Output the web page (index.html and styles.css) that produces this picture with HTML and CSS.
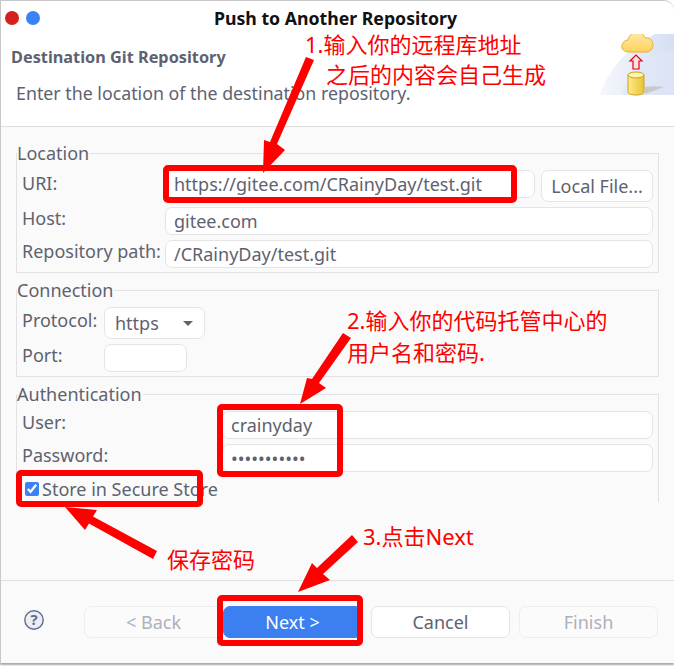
FILE: index.html
```html
<!DOCTYPE html>
<html lang="zh">

<head>
    <meta charset="UTF-8">
    <meta name="viewport" content="width=device-width, initial-scale=1.0">
    <title>Push to Another Repository</title>
    <link rel="stylesheet" href="styles.css">
</head>

<body>

    <div class="window">
        <div class="titlebar">
            <span class="dot dot-close"></span>
            <span class="dot dot-max"></span>
            <h1 class="title">Push to Another Repository</h1>
        </div>

        <div class="banner">
            <div class="banner-text">
                <h2 class="banner-title">Destination Git Repository</h2>
                <p class="banner-desc">Enter the location of the destination repository.</p>
            </div>
            <svg class="banner-art" width="74" height="68" viewBox="0 0 74 68">
                <defs>
                    <linearGradient id="swoosh" x1="0" y1="0" x2="1" y2="0">
                        <stop offset="0" stop-color="#f6f7fc"/>
                        <stop offset="1" stop-color="#d5def3"/>
                    </linearGradient>
                    <linearGradient id="cloud" x1="0" y1="0" x2="0" y2="1">
                        <stop offset="0" stop-color="#ffe9a8"/>
                        <stop offset="1" stop-color="#ffd25e"/>
                    </linearGradient>
                    <linearGradient id="can" x1="0" y1="0" x2="1" y2="0">
                        <stop offset="0" stop-color="#ffe98a"/>
                        <stop offset="1" stop-color="#e8c433"/>
                    </linearGradient>
                </defs>
                <path d="M0 67C8 40 36 8 74 0V67Z" fill="url(#swoosh)"/>
                <path d="M22 67C30 40 52 24 74 22V67Z" fill="#dfe6f6" opacity=".6"/>
                <path d="M45 66l19-7-11-1-8 1z" fill="#c9c9c9"/>
                <path d="M29 24c-5 0-8-3-7-7 1-3 3-5 6-5 1-5 5-8 9-8 4 0 7 3 8 6 4-1 8 2 8 7 0 4-3 7-7 7z" fill="url(#cloud)" stroke="#e8b030"/>
                <path d="M33 41V33h-3l6-6 6 6h-3v8z" fill="#ffe0e0" stroke="#e00010" stroke-width="1.2"/>
                <path d="M28 47v17c0 2 4 3 8 3s8-1 8-3V47z" fill="url(#can)" stroke="#c9a324"/>
                <ellipse cx="36" cy="47" rx="8" ry="3" fill="#fff3a8" stroke="#c9a324"/>
            </svg>
        </div>

        <form class="content">
            <fieldset class="group">
                <legend>Location</legend>
                <div class="grid grid-location">
                    <label class="field-label">URI:</label>
                    <input class="text-input" type="text" value="https://gitee.com/CRainyDay/test.git">
                    <button type="button" class="btn btn-local">Local File...</button>

                    <label class="field-label">Host:</label>
                    <input class="text-input span-2" type="text" value="gitee.com">

                    <label class="field-label">Repository path:</label>
                    <input class="text-input span-2" type="text" value="/CRainyDay/test.git">
                </div>
            </fieldset>

            <fieldset class="group">
                <legend>Connection</legend>
                <div class="grid grid-connection">
                    <label class="field-label">Protocol:</label>
                    <div class="combo">https<span class="caret"></span></div>

                    <label class="field-label">Port:</label>
                    <input class="text-input port-input" type="text">
                </div>
            </fieldset>

            <fieldset class="group group-open">
                <legend>Authentication</legend>
                <div class="grid grid-auth">
                    <label class="field-label">User:</label>
                    <input class="text-input" type="text" value="crainyday">

                    <label class="field-label">Password:</label>
                    <input class="text-input" type="password" value="crainyday12">
                </div>
                <label class="store-row">
                    <input class="store-check" type="checkbox" checked>
                    Store in Secure Store
                </label>
            </fieldset>
        </form>

        <div class="footer">
            <svg class="help" width="20" height="20" viewBox="0 0 20 20">
                <circle cx="10" cy="10" r="9.2" fill="#eceef4" stroke="#5f6d90" stroke-width="1.4"/>
                <text x="10" y="15" text-anchor="middle" class="help-mark">?</text>
            </svg>
            <div class="footer-buttons">
                <button type="button" class="btn btn-footer" disabled>&lt; Back</button>
                <button type="button" class="btn btn-footer btn-next">Next &gt;</button>
                <button type="button" class="btn btn-footer btn-cancel">Cancel</button>
                <button type="button" class="btn btn-footer" disabled>Finish</button>
            </div>
        </div>
    </div>

    <!-- 红色标注 -->
    <svg class="marks" width="674" height="666" viewBox="0 0 674 666">
        <g fill="none" stroke="#ff0000" stroke-width="6">
            <rect x="166" y="168" width="348" height="32" rx="2"/>
            <rect x="220" y="407" width="120" height="67" rx="2"/>
            <rect x="19" y="473" width="181" height="31" rx="2"/>
            <rect x="220" y="598" width="140" height="45" rx="2"/>
        </g>
        <g fill="#ff0000">
            <path d="M306 57L314 60 277 144 285 150 263 173 264 140 270 142Z"/>
            <path d="M343 333L351 338 319 383 326 388 300 404 307 378 312 379Z"/>
            <path d="M65 507L97 510 93 516.5 157 551 153 559 89 523.5 85 530Z"/>
            <path d="M352 535L358 542 323 574 330 580 298 592 312 563 317 568Z"/>
        </g>
    </svg>
    <div class="note note-1">1.输入你的远程库地址</div>
    <div class="note note-1b">之后的内容会自己生成</div>
    <div class="note note-2">2.输入你的代码托管中心的</div>
    <div class="note note-2b">用户名和密码.</div>
    <div class="note note-save">保存密码</div>
    <div class="note note-3">3.点击Next</div>

</body>

</html>
```
FILE: styles.css
```css
* {
    box-sizing: border-box;
}

body {
    margin: 0;
    width: 674px;
    height: 666px;
    overflow: hidden;
    position: relative;
    background-color: #fff;
    font-family: 'Noto Sans', sans-serif;
    font-size: 18px;
    color: #5e6270;
}

.window {
    height: 663px;
    display: flex;
    flex-direction: column;
    background-color: #fafafa;
    border-top: 1px solid #c8c8c8;
    border-left: 1px solid #c8c8c8;
    border-top-right-radius: 10px;
    box-shadow: 0 2px 2px #a8a8a8;
}

.titlebar {
    height: 33px;
    display: flex;
    align-items: center;
    position: relative;
    padding-left: 4px;
    gap: 7px;
    background-color: #fff;
    border-top-right-radius: 10px;
}

.dot {
    width: 14px;
    height: 14px;
    border-radius: 50%;
}

.dot-close {
    background-color: #d61f1f;
}

.dot-max {
    background-color: #3b82f6;
}

.title {
    position: absolute;
    left: 0;
    right: 4px;
    margin: 0;
    text-align: center;
    font-size: 17.7px;
    font-weight: 700;
    color: #111;
}

.banner {
    height: 93px;
    display: flex;
    justify-content: space-between;
    align-items: flex-start;
    background-color: #fff;
    border-bottom: 1px solid #dedede;
}

.banner-text {
    padding: 11px 0 0 10px;
}

.banner-title {
    margin: 0;
    font-size: 16.3px;
    line-height: 24px;
    font-weight: 700;
}

.banner-desc {
    margin: 16px 0 0 5px;
    font-size: 17.8px;
    line-height: 16px;
}

.banner-art {
    margin-top: -6px;
}

.content {
    flex: 1;
    padding: 16px 15px 0 15px;
}

.group {
    margin: 0 0 7px;
    padding: 0;
    border: 1px solid #e2e2e2;
    min-width: 0;
}

.group legend {
    padding: 0 1px 0 0;
    line-height: 20px;
    height: 20px;
}

.group-open {
    border-bottom: none;
    height: 118px;
}

.grid {
    display: grid;
    row-gap: 5px;
    padding: 7px 5px 4px 5px;
    align-items: center;
}

.grid-location {
    grid-template-columns: 143px 1fr auto;
    grid-template-rows: 32px 28px 28px;
}

.grid-connection {
    grid-template-columns: 82px 1fr;
    grid-template-rows: 32px 28px;
    justify-items: start;
}

.grid-auth {
    grid-template-columns: 200px 1fr;
    grid-template-rows: 28px 28px;
    padding-bottom: 0;
}

.field-label {
    padding-bottom: 7px;
    white-space: nowrap;
}

.span-2 {
    grid-column: span 2;
}

.text-input {
    width: 100%;
    height: 28px;
    padding: 0 8px;
    font-family: inherit;
    font-size: 18px;
    color: #5e6270;
    background-color: #fff;
    border: 1px solid #e4e4e4;
    border-radius: 7px;
    outline: none;
}

.grid-location .text-input:not(.span-2) {
    align-self: start;
}

.port-input {
    width: 83px;
}

.combo {
    width: 101px;
    height: 32px;
    display: flex;
    align-items: center;
    justify-content: space-between;
    padding: 0 11px 0 10px;
    background-color: #fff;
    border: 1px solid #e4e4e4;
    border-radius: 7px;
}

.caret {
    width: 0;
    height: 0;
    border-left: 5px solid transparent;
    border-right: 5px solid transparent;
    border-top: 5px solid #5e6270;
}

.store-row {
    display: flex;
    align-items: center;
    gap: 3px;
    margin: 10px 0 0 8px;
    line-height: 14px;
}

.store-check {
    width: 14px;
    height: 14px;
    margin: 0;
    accent-color: #3b82f6;
}

.btn {
    font-family: inherit;
    font-size: 18px;
    color: #5e6270;
    background-color: #fff;
    border: 1px solid #e4e4e4;
    border-radius: 7px;
    padding: 0;
}

.btn-local {
    width: 112px;
    height: 32px;
    margin-left: 6px;
}

.footer {
    height: 83px;
    display: flex;
    align-items: flex-start;
    padding: 25px 0 0 23px;
    border-top: 1px solid #e0e0e0;
}

.help {
    margin: 4px 40px 0 0;
}

.help-mark {
    font-family: 'Noto Sans', sans-serif;
    font-size: 15px;
    font-weight: 700;
    fill: #5f6d90;
}

.footer-buttons {
    display: flex;
}

.btn-footer {
    width: 139px;
    height: 32px;
}

.btn-footer:disabled {
    color: #aeb0b8;
    background-color: #fbfbfb;
    border-color: #eeeeee;
}

.btn-next {
    color: #fff;
    background-color: #3b7ff0;
    border-color: #3b7ff0;
}

.btn-cancel {
    margin: 0 9px;
}

.marks {
    position: absolute;
    left: 0;
    top: 0;
}

.note {
    position: absolute;
    color: #ff0000;
    font-family: 'Noto Sans', 'Noto Sans CJK SC', sans-serif;
    font-size: 22px;
    line-height: 22px;
    white-space: nowrap;
}

.note-1 {
    left: 305px;
    top: 33px;
}

.note-1b {
    left: 326px;
    top: 63px;
}

.note-2 {
    left: 347px;
    top: 309px;
}

.note-2b {
    left: 347px;
    top: 341px;
}

.note-save {
    left: 167px;
    top: 548px;
}

.note-3 {
    left: 363px;
    top: 525px;
}
```
